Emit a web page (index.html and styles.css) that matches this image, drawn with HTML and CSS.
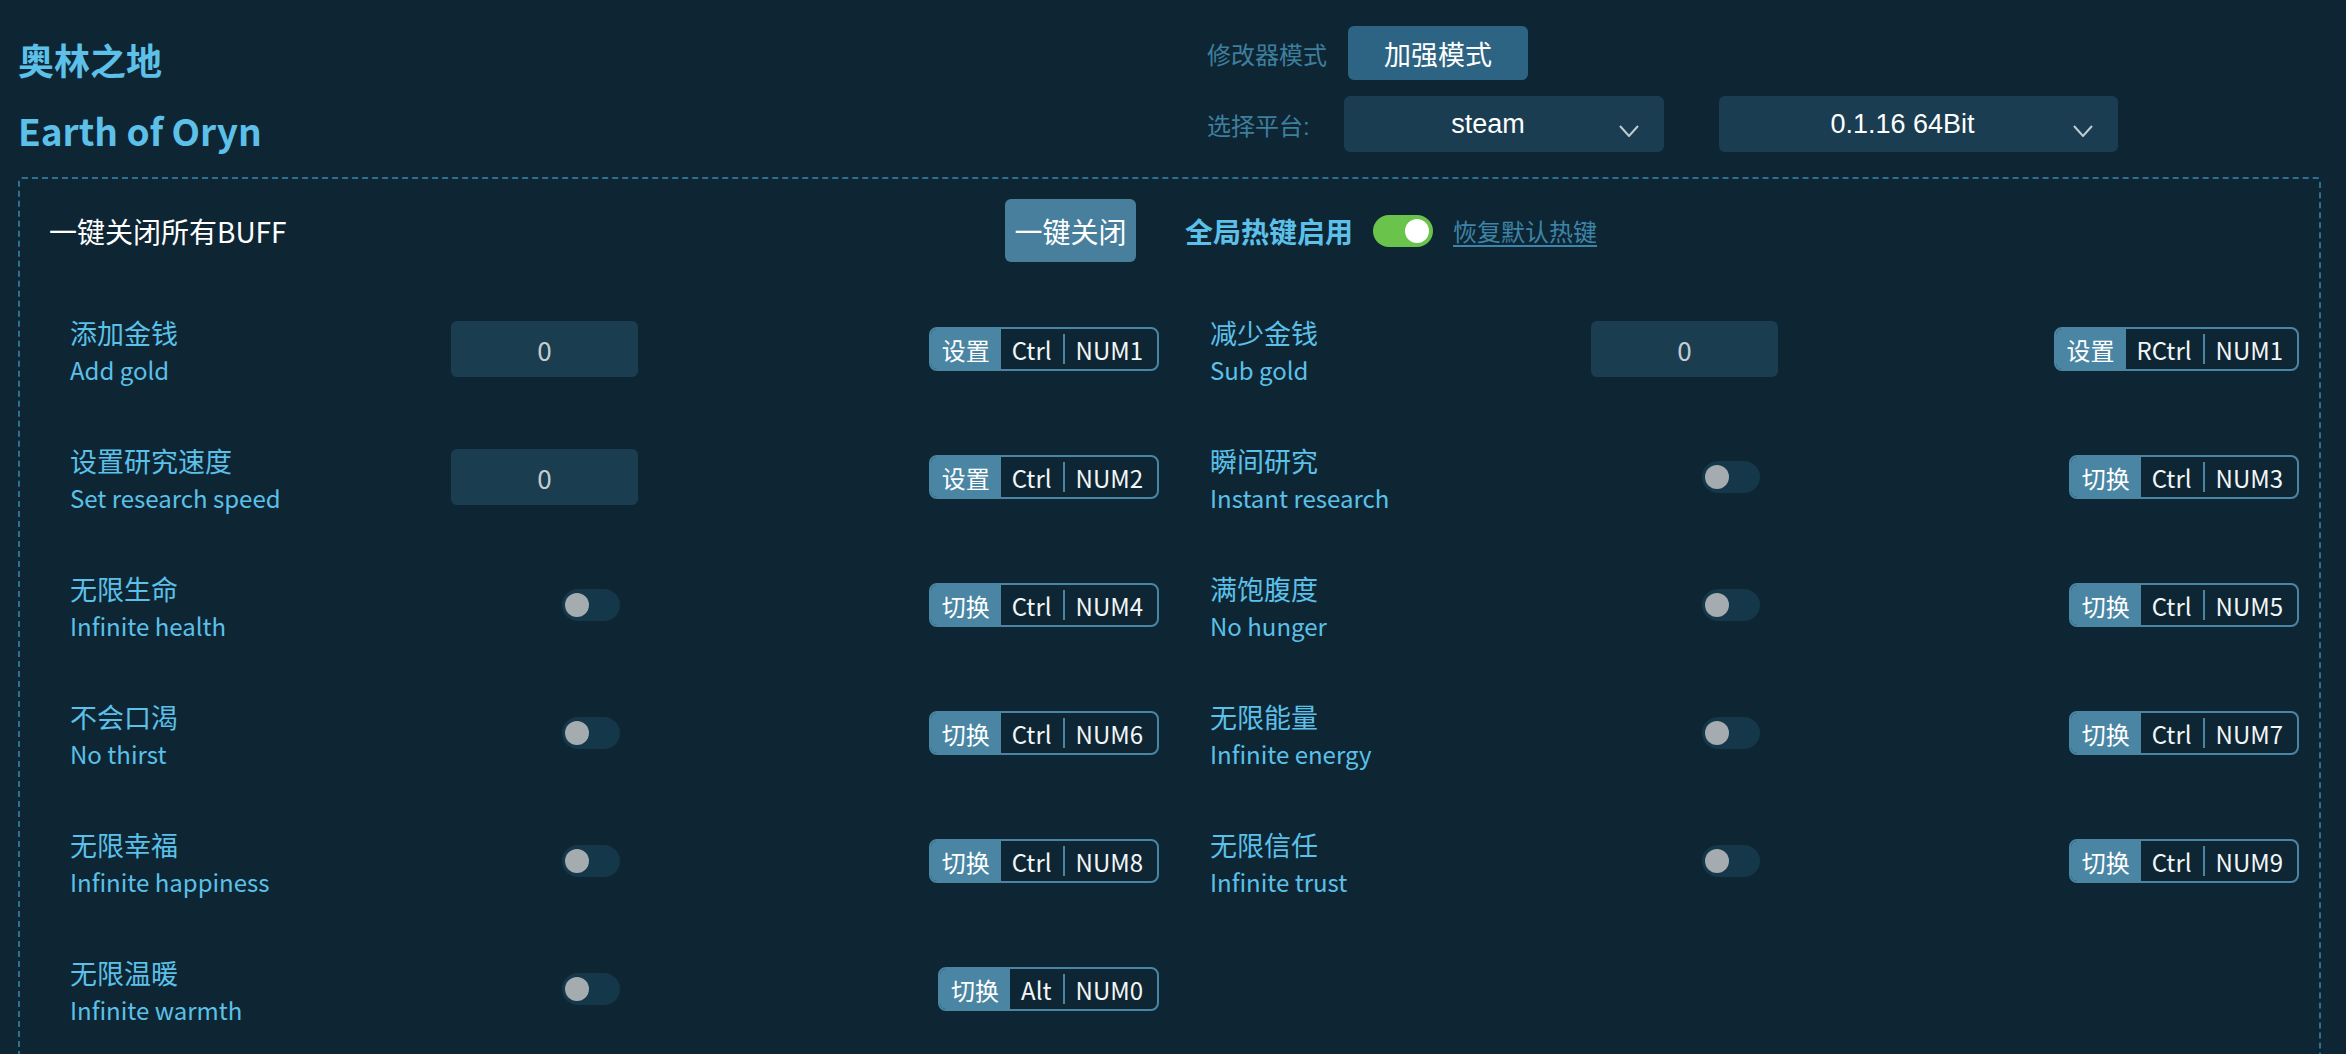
FILE: index.html
```html
<!DOCTYPE html>
<html lang="zh-CN">
<head>
<meta charset="utf-8">
<title>奥林之地 Earth of Oryn</title>
<link rel="stylesheet" href="styles.css">
</head>
<body>
<div class="app">
  <header class="top">
    <div class="titles">
      <h1 class="title-cn">奥林之地</h1>
      <h2 class="title-en">Earth of Oryn</h2>
    </div>
    <div class="opts">
      <div class="opt-row">
        <span class="opt-label">修改器模式</span>
        <button class="mode-btn">加强模式</button>
      </div>
      <div class="opt-row">
        <span class="opt-label">选择平台:</span>
        <div class="select s-platform">steam
          <svg class="chev" viewBox="0 0 20 12"><polyline points="1,1 10,11 19,1"/></svg>
        </div>
        <div class="select s-version">0.1.16 64Bit
          <svg class="chev" viewBox="0 0 20 12"><polyline points="1,1 10,11 19,1"/></svg>
        </div>
      </div>
    </div>
  </header>

  <section class="panel">
    <div class="panel-head">
      <span class="kill-label">一键关闭所有BUFF</span>
      <button class="kill-btn">一键关闭</button>
      <span class="hot-label">全局热键启用</span>
      <span class="switch on"></span>
      <a class="reset-link" href="#">恢复默认热键</a>
    </div>

    <div class="grid">
      <div class="cell">
        <div class="label"><div class="cn">添加金钱</div><div class="en">Add gold</div></div>
        <div class="num">0</div>
        <div class="hk"><span class="hk-act">设置</span><span class="hk-key">Ctrl</span><span class="hk-sep"></span><span class="hk-key last">NUM1</span></div>
      </div>
      <div class="cell">
        <div class="label"><div class="cn">减少金钱</div><div class="en">Sub gold</div></div>
        <div class="num">0</div>
        <div class="hk"><span class="hk-act">设置</span><span class="hk-key">RCtrl</span><span class="hk-sep"></span><span class="hk-key last">NUM1</span></div>
      </div>

      <div class="cell">
        <div class="label"><div class="cn">设置研究速度</div><div class="en">Set research speed</div></div>
        <div class="num">0</div>
        <div class="hk"><span class="hk-act">设置</span><span class="hk-key">Ctrl</span><span class="hk-sep"></span><span class="hk-key last">NUM2</span></div>
      </div>
      <div class="cell">
        <div class="label"><div class="cn">瞬间研究</div><div class="en">Instant research</div></div>
        <span class="switch"></span>
        <div class="hk"><span class="hk-act">切换</span><span class="hk-key">Ctrl</span><span class="hk-sep"></span><span class="hk-key last">NUM3</span></div>
      </div>

      <div class="cell">
        <div class="label"><div class="cn">无限生命</div><div class="en">Infinite health</div></div>
        <span class="switch"></span>
        <div class="hk"><span class="hk-act">切换</span><span class="hk-key">Ctrl</span><span class="hk-sep"></span><span class="hk-key last">NUM4</span></div>
      </div>
      <div class="cell">
        <div class="label"><div class="cn">满饱腹度</div><div class="en">No hunger</div></div>
        <span class="switch"></span>
        <div class="hk"><span class="hk-act">切换</span><span class="hk-key">Ctrl</span><span class="hk-sep"></span><span class="hk-key last">NUM5</span></div>
      </div>

      <div class="cell">
        <div class="label"><div class="cn">不会口渴</div><div class="en">No thirst</div></div>
        <span class="switch"></span>
        <div class="hk"><span class="hk-act">切换</span><span class="hk-key">Ctrl</span><span class="hk-sep"></span><span class="hk-key last">NUM6</span></div>
      </div>
      <div class="cell">
        <div class="label"><div class="cn">无限能量</div><div class="en">Infinite energy</div></div>
        <span class="switch"></span>
        <div class="hk"><span class="hk-act">切换</span><span class="hk-key">Ctrl</span><span class="hk-sep"></span><span class="hk-key last">NUM7</span></div>
      </div>

      <div class="cell">
        <div class="label"><div class="cn">无限幸福</div><div class="en">Infinite happiness</div></div>
        <span class="switch"></span>
        <div class="hk"><span class="hk-act">切换</span><span class="hk-key">Ctrl</span><span class="hk-sep"></span><span class="hk-key last">NUM8</span></div>
      </div>
      <div class="cell">
        <div class="label"><div class="cn">无限信任</div><div class="en">Infinite trust</div></div>
        <span class="switch"></span>
        <div class="hk"><span class="hk-act">切换</span><span class="hk-key">Ctrl</span><span class="hk-sep"></span><span class="hk-key last">NUM9</span></div>
      </div>

      <div class="cell">
        <div class="label"><div class="cn">无限温暖</div><div class="en">Infinite warmth</div></div>
        <span class="switch"></span>
        <div class="hk"><span class="hk-act">切换</span><span class="hk-key">Alt</span><span class="hk-sep"></span><span class="hk-key last">NUM0</span></div>
      </div>
    </div>
  </section>
</div>
</body>
</html>
```

FILE: styles.css
```css
* { box-sizing: border-box; }

html, body {
  margin: 0;
  background: #0e2634;
}

body {
  width: 2346px;
  height: 1054px;
  overflow: hidden;
  font-family: "Noto Sans CJK SC", "Noto Sans", sans-serif;
  color: #ffffff;
}

/* ---------- header ---------- */
.top {
  display: flex;
  height: 177px;
  padding-left: 18px;
}

.titles {
  width: 1189px;
  padding-top: 36px;
}

.title-cn,
.title-en {
  margin: 0;
  line-height: 46px;
  font-weight: 700;
  color: #5cc0e8;
}

.title-cn { font-size: 36px; }

.title-en {
  font-size: 37px;
  margin-top: 25px;
}

.opts {
  padding-top: 26px;
  display: flex;
  flex-direction: column;
  gap: 16px;
}

.opt-row {
  display: flex;
  align-items: center;
}

.opt-label {
  width: 137px;
  font-family: "Liberation Sans", "Noto Sans CJK SC", sans-serif;
  font-size: 24px;
  color: #3f7f9e;
}

.mode-btn {
  margin-left: 4px;
  width: 180px;
  height: 54px;
  border: 0;
  border-radius: 6px;
  background: #2d6483;
  color: #ffffff;
  font-family: "Noto Sans CJK SC", sans-serif;
  font-size: 27px;
}

.select {
  position: relative;
  height: 56px;
  border-radius: 6px;
  background: #1b3d51;
  display: flex;
  align-items: center;
  justify-content: center;
  padding-right: 32px;
  font-family: "Liberation Sans", sans-serif;
  font-size: 27px;
  color: #ffffff;
}

.s-platform { width: 320px; }
.s-version { width: 399px; margin-left: 55px; }

.chev {
  position: absolute;
  right: 25px;
  top: 29px;
  width: 20px;
  height: 12px;
  fill: none;
  stroke: #c3cbcf;
  stroke-width: 2;
}

/* ---------- panel ---------- */
.panel {
  margin-left: 18px;
  width: 2303px;
  height: 920px;
  border: 2px dashed #2f6f8f;
  border-radius: 4px;
}

.panel-head {
  display: flex;
  align-items: center;
  height: 63px;
  margin-top: 20px;
  padding-left: 29px;
}

.kill-label {
  width: 956px;
  font-size: 28px;
  color: #ffffff;
}

.kill-btn {
  width: 131px;
  height: 63px;
  border: 0;
  border-radius: 6px;
  background: #477f9d;
  color: #ffffff;
  font-family: "Noto Sans CJK SC", sans-serif;
  font-size: 28px;
  padding: 0;
}

.hot-label {
  margin-left: 49px;
  font-size: 28px;
  font-weight: 700;
  color: #5cc0e8;
}

.panel-head .switch { margin-left: 20px; }

.reset-link {
  margin-left: 20px;
  font-size: 24px;
  color: #3d84a8;
  text-decoration: underline;
  text-underline-offset: 4px;
}

/* ---------- option grid ---------- */
.grid {
  display: grid;
  grid-template-columns: 1089px 1089px;
  column-gap: 51px;
  grid-auto-rows: 128px;
  margin-top: 23px;
  padding-left: 50px;
}

.cell {
  display: flex;
  align-items: center;
}

.label {
  width: 381px;
  padding-top: 3px;
  color: #5cc0e8;
}

.cn {
  font-size: 27px;
  line-height: 37px;
}

.en {
  font-size: 24px;
  line-height: 37px;
}

.num {
  width: 187px;
  height: 56px;
  border-radius: 6px;
  background: #1b3d50;
  display: flex;
  align-items: center;
  justify-content: center;
  font-size: 26px;
  color: #c5cdd1;
}

.switch {
  position: relative;
  display: inline-block;
  width: 58px;
  height: 32px;
  border-radius: 16px;
  background: #15374a;
}

.cell .switch { margin-left: 111px; }

.switch::after {
  content: "";
  position: absolute;
  left: 3px;
  top: 4px;
  width: 24px;
  height: 24px;
  border-radius: 50%;
  background: #a4acb0;
}

.switch.on {
  width: 60px;
  background: #6ac44c;
}

.switch.on::after {
  left: auto;
  right: 4px;
  background: #ffffff;
}

/* hotkey chip */
.hk {
  margin-left: auto;
  display: flex;
  align-items: center;
  height: 44px;
  border: 2px solid #4a86a4;
  border-radius: 8px;
  overflow: hidden;
  font-size: 24px;
  color: #f2f6f8;
}

.hk-act {
  height: 100%;
  display: flex;
  align-items: center;
  padding: 0 11px;
  background: #4a86a4;
  color: #ffffff;
}

.hk-key { padding: 0 11px; }
.hk-key.last { padding-right: 14px; }

.hk-sep {
  width: 2px;
  height: 30px;
  background: #4a86a4;
}
```
